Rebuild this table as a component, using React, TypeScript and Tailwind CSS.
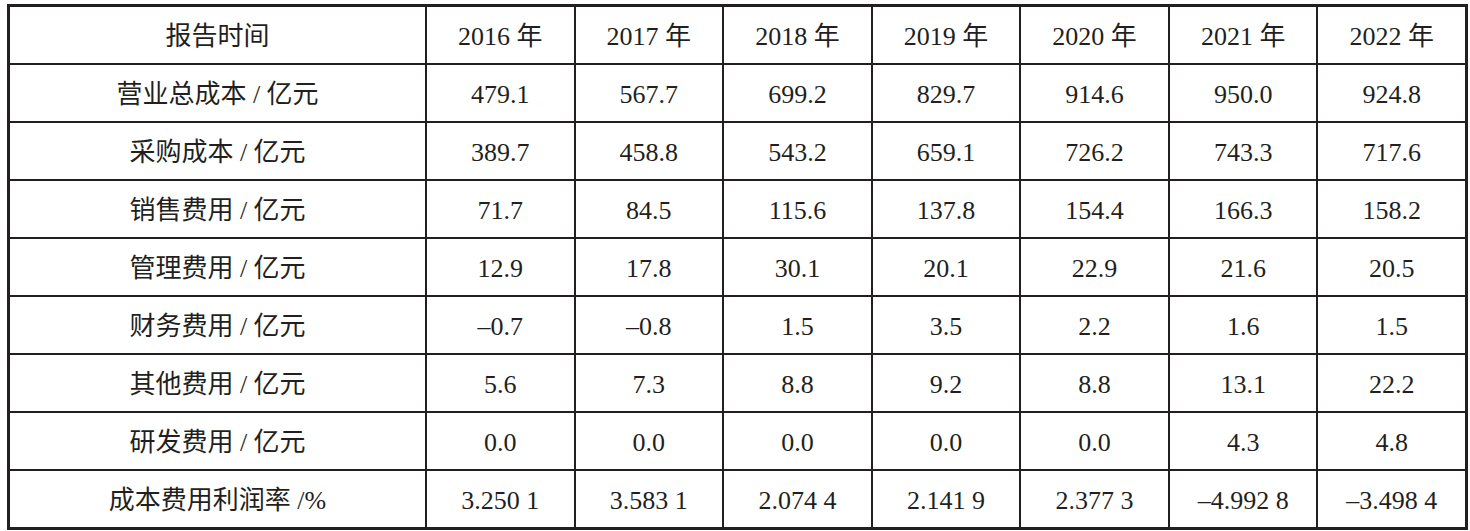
import { Fragment } from "react";

const years = ["2016", "2017", "2018", "2019", "2020", "2021", "2022"];

const rows: { label: string; values: string[] }[] = [
  { label: "营业总成本 / 亿元", values: ["479.1", "567.7", "699.2", "829.7", "914.6", "950.0", "924.8"] },
  { label: "采购成本 / 亿元", values: ["389.7", "458.8", "543.2", "659.1", "726.2", "743.3", "717.6"] },
  { label: "销售费用 / 亿元", values: ["71.7", "84.5", "115.6", "137.8", "154.4", "166.3", "158.2"] },
  { label: "管理费用 / 亿元", values: ["12.9", "17.8", "30.1", "20.1", "22.9", "21.6", "20.5"] },
  { label: "财务费用 / 亿元", values: ["–0.7", "–0.8", "1.5", "3.5", "2.2", "1.6", "1.5"] },
  { label: "其他费用 / 亿元", values: ["5.6", "7.3", "8.8", "9.2", "8.8", "13.1", "22.2"] },
  { label: "研发费用 / 亿元", values: ["0.0", "0.0", "0.0", "0.0", "0.0", "4.3", "4.8"] },
  { label: "成本费用利润率 /%", values: ["3.250 1", "3.583 1", "2.074 4", "2.141 9", "2.377 3", "–4.992 8", "–3.498 4"] },
];

function Cell({ children }: { children: React.ReactNode }) {
  return (
    <div className="flex h-[56px] items-center justify-center bg-white pt-[4px] whitespace-pre">
      {children}
    </div>
  );
}

export default function App() {
  return (
    <div className="min-h-[531px] w-[1470px] bg-white pl-[7px] pt-[4px] font-['Liberation_Serif','Noto_Sans_CJK_SC',serif] text-[26px] leading-none text-[#231f20]">
      <div className="grid w-[1461px] grid-cols-[415px_repeat(7,1fr)] gap-[2px] border-[3px] border-[#231f20] bg-[#231f20]">
        <Cell>报告时间</Cell>
        {years.map((y) => (
          <Cell key={y}>{y} 年</Cell>
        ))}
        {rows.map((row) => (
          <Fragment key={row.label}>
            <Cell>{row.label}</Cell>
            {row.values.map((v, i) => (
              <Cell key={i}>{v}</Cell>
            ))}
          </Fragment>
        ))}
      </div>
    </div>
  );
}
